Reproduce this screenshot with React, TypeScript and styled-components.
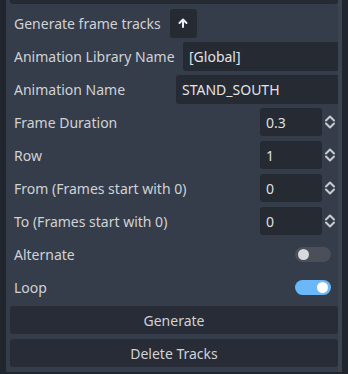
import React, { useState } from 'react'
import styled, { createGlobalStyle } from 'styled-components'

const Global = createGlobalStyle`
  html, body {
    margin: 0;
    padding: 0;
    background: #21252d;
  }
  body {
    font-family: "Noto Sans", "DejaVu Sans", sans-serif;
    font-size: 14px;
    color: #d2d4d8;
  }
`

const Panel = styled.div`
  margin-left: 6px;
  width: 336px;
  height: 372px;
  box-sizing: border-box;
  padding-left: 4px;
  background: #363d4a;
  border-right: 4px solid #3c4351;
  display: flex;
  flex-direction: column;
  gap: 5px;
  overflow: hidden;
`

const CutEdge = styled.div`
  height: 4px;
  flex: 0 0 4px;
  background: #262a33;
  border-radius: 0 0 3px 3px;
`

const Row = styled.div`
  height: 28px;
  flex: 0 0 28px;
  display: flex;
  align-items: center;
`

const Label = styled.div<{ $grow?: boolean }>`
  flex: ${(p) => (p.$grow === false ? '0 0 auto' : '1')};
  padding-left: 4px;
  color: #d0d2d6;
  white-space: nowrap;
`

const IconButton = styled.button`
  width: 27px;
  height: 29px;
  margin-left: 9px;
  border: none;
  border-radius: 3px;
  background: #262a33;
  display: flex;
  align-items: center;
  justify-content: center;
  padding: 0;
`

const TextInput = styled.div<{ $w: number }>`
  width: ${(p) => p.$w}px;
  height: 29px;
  box-sizing: border-box;
  padding-left: 6px;
  background: #262a33;
  border-radius: 3px 0 0 3px;
  display: flex;
  align-items: center;
  color: #e2e3e6;
`

const Spin = styled.div`
  display: flex;
  align-items: center;
  width: 78px;
`

const SpinField = styled.div`
  width: 62px;
  height: 28px;
  box-sizing: border-box;
  padding-left: 6px;
  background: #262a33;
  border-radius: 3px;
  display: flex;
  align-items: center;
  color: #dfe0e3;
`

const SpinArrows = styled.div`
  flex: 1;
  display: flex;
  justify-content: center;
`

const Switch = styled.div<{ $on: boolean }>`
  width: 36px;
  height: 15px;
  margin-right: 7px;
  border-radius: 8px;
  background: ${(p) => (p.$on ? '#6ab8f7' : '#4a4f59')};
  position: relative;
  &::after {
    content: '';
    position: absolute;
    top: 2px;
    left: ${(p) => (p.$on ? '22px' : '3px')};
    width: 11px;
    height: 11px;
    border-radius: 50%;
    background: ${(p) => (p.$on ? '#ffffff' : '#d8d9dc')};
  }
`

const WideButton = styled.button`
  height: 28px;
  flex: 0 0 28px;
  border: none;
  border-radius: 3px;
  background: #282c36;
  color: #d0d2d6;
  font-family: inherit;
  font-size: 14px;
  padding: 0;
`

const SpinIcon = () => (
  <svg width="12" height="16" viewBox="0 0 12 16">
    <path d="M2 6.5 L6 2.5 L10 6.5 M2 9.5 L6 13.5 L10 9.5" fill="none" stroke="#c8cbd0" strokeWidth="2" strokeLinecap="round" strokeLinejoin="round" />
  </svg>
)

const ArrowUp = () => (
  <svg width="10" height="10" viewBox="0 0 10 10">
    <path d="M5 9 V2 M1.5 5 L5 1.5 L8.5 5" fill="none" stroke="#eceef0" strokeWidth="2" strokeLinecap="round" strokeLinejoin="round" />
  </svg>
)

const spins = [
  { label: 'Frame Duration', value: '0.3' },
  { label: 'Row', value: '1' },
  { label: 'From (Frames start with 0)', value: '0' },
  { label: 'To (Frames start with 0)', value: '0' },
]

export default function App() {
  const [alternate, setAlternate] = useState(false)
  const [loop, setLoop] = useState(true)

  return (
    <>
      <Global />
      <Panel>
        <CutEdge />
        <Row>
          <Label $grow={false}>Generate frame tracks</Label>
          <IconButton>
            <ArrowUp />
          </IconButton>
        </Row>
        <Row>
          <Label>Animation Library Name</Label>
          <TextInput $w={155}>[Global]</TextInput>
        </Row>
        <Row>
          <Label>Animation Name</Label>
          <TextInput $w={162}>STAND_SOUTH</TextInput>
        </Row>
        {spins.map((s) => (
          <Row key={s.label}>
            <Label>{s.label}</Label>
            <Spin>
              <SpinField>{s.value}</SpinField>
              <SpinArrows>
                <SpinIcon />
              </SpinArrows>
            </Spin>
          </Row>
        ))}
        <Row>
          <Label>Alternate</Label>
          <Switch $on={alternate} onClick={() => setAlternate(!alternate)} />
        </Row>
        <Row>
          <Label>Loop</Label>
          <Switch $on={loop} onClick={() => setLoop(!loop)} />
        </Row>
        <WideButton>Generate</WideButton>
        <WideButton>Delete Tracks</WideButton>
      </Panel>
    </>
  )
}
